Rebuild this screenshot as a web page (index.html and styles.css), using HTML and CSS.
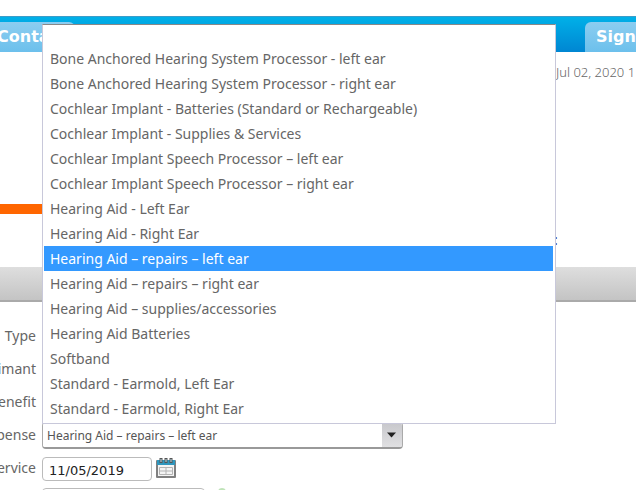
FILE: index.html
```
<!DOCTYPE html>
<html lang="en">
	<head>
		<meta charset="utf-8">
		<title>Claim</title>
		<link rel="stylesheet" href="styles.css">
	</head>
	<body>
		<div class="page">
			<nav class="topbar">
				<a class="tab contact" href="#">Contact</a>
				<a class="tab sign" href="#">Sign</a>
			</nav>
			<div class="date">Jul 02, 2020 1</div>
			<div class="rule"></div>
			<div class="colon">:</div>
			<div class="section"></div>
			<form class="claim">
				<div class="row"><span class="label">Type</span></div>
				<div class="row"><span class="label">Claimant</span></div>
				<div class="row"><span class="label">Benefit</span></div>
				<div class="row">
					<label class="label" for="expense">Expense</label>
					<div class="combo">
						<select class="select" id="expense">
							<option>Hearing Aid – repairs – left ear</option>
						</select>
						<svg class="arrow" viewBox="0 0 20 23"><path d="M5 9h9l-4.500 5z" fill="#222"/></svg>
					</div>
				</div>
				<div class="row">
					<label class="label" for="service">Service</label>
					<input class="text service" id="service" type="text" value="11/05/2019">
					<button class="calendar" type="button" aria-label="Pick a date">
						<svg width="20" height="20" viewBox="0 0 20 20">
							<rect x="0" y="2" width="20" height="18" rx="1" fill="#808080"/>
							<rect x="1" y="2" width="18" height="5" fill="#2f96bd"/>
							<rect x="2" y="7" width="16" height="11" fill="#f4f4f4"/>
							<path d="M3.500 9.500h13v7h-13zM3.500 13h13M10 9.500v7" fill="none" stroke="#b4b4b4"/>
							<path d="M5 0v5M10 0v5M15 0v5" stroke="#555" stroke-width="3"/>
							<path d="M5 1v3M10 1v3M15 1v3" stroke="#b9dbe8"/>
						</svg>
					</button>
				</div>
				<div class="row last">
					<span class="label"></span>
					<input class="text amount" type="text" aria-label="Amount">
					<span class="ok"></span>
				</div>
			</form>
			<ul class="options" role="listbox">
				<li class="option blank" role="option"></li>
				<li class="option" role="option">Bone Anchored Hearing System Processor - left ear</li>
				<li class="option" role="option">Bone Anchored Hearing System Processor - right ear</li>
				<li class="option" role="option">Cochlear Implant - Batteries (Standard or Rechargeable)</li>
				<li class="option" role="option">Cochlear Implant - Supplies &amp; Services</li>
				<li class="option" role="option">Cochlear Implant Speech Processor – left ear</li>
				<li class="option" role="option">Cochlear Implant Speech Processor – right ear</li>
				<li class="option" role="option">Hearing Aid - Left Ear</li>
				<li class="option" role="option">Hearing Aid - Right Ear</li>
				<li class="option selected" role="option" aria-selected="true">Hearing Aid – repairs – left ear</li>
				<li class="option" role="option">Hearing Aid – repairs – right ear</li>
				<li class="option" role="option">Hearing Aid – supplies/accessories</li>
				<li class="option" role="option">Hearing Aid Batteries</li>
				<li class="option" role="option">Softband</li>
				<li class="option" role="option">Standard - Earmold, Left Ear</li>
				<li class="option" role="option">Standard - Earmold, Right Ear</li>
			</ul>
		</div>
	</body>
</html>
```
FILE: styles.css
```
*{
	box-sizing: border-box;
}
body{
	margin: 0;
	background: #fff;
	color: #666;
	font-family: "Noto Sans", "Open Sans", sans-serif;
	font-size: 14px;
	overflow: hidden;
}
.page{
	position: relative;
	padding-top: 16px;
	margin-right: 1px;
	overflow: hidden;
}
.topbar{
	display: flex;
	justify-content: space-between;
	align-items: flex-end;
	height: 36px;
	border-top: 1px solid #3c9cc8;
	background: linear-gradient(#00b0e8, #0086d2);
}
.tab{
	height: 30px;
	padding-top: 2px;
	background: linear-gradient(#8ccdf0, #6cc0ec);
	color: #fff;
	font-family: "DejaVu Sans", sans-serif;
	font-size: 16px;
	font-weight: bold;
	line-height: 26px;
	text-decoration: none;
}
.contact{
	width: 78px;
	margin-left: -3px;
	border-radius: 0 6px 0 0;
}
.sign{
	width: 51px;
	padding-left: 11px;
	border-radius: 6px 0 0 0;
	overflow: hidden;
}
.date{
	width: 80px;
	height: 40px;
	margin-left: auto;
	font-size: 13px;
	font-weight: 300;
	line-height: 40px;
	white-space: nowrap;
}
.rule{
	width: 200px;
	height: 10px;
	margin-top: 112px;
	background: #ff6600;
}
.colon{
	width: 82px;
	height: 53px;
	margin-left: auto;
	color: #34236e;
	line-height: 51px;
}
.section{
	height: 35px;
	border-bottom: 2px solid #aaa;
	background: linear-gradient(#dedede, #c4c4c4);
}
.claim{
	height: 188px;
	padding-top: 17px;
	overflow: hidden;
}
.row{
	display: flex;
	align-items: center;
	height: 33px;
}
.label{
	display: flex;
	justify-content: flex-end;
	width: 36px;
	margin-right: 6px;
	white-space: nowrap;
}
.combo{
	display: flex;
	width: 361px;
	height: 27px;
	margin-top: 2px;
	border: 1px solid #aaa;
	border-bottom: 2px solid #999;
	border-radius: 4px;
	overflow: hidden;
}
.select{
	flex: 1;
	padding: 0 4px;
	border: 0;
	background: #fff;
	color: #555;
	font: inherit;
	font-size: 12px;
	appearance: none;
}
.arrow{
	width: 20px;
	background: linear-gradient(#c8c8cc, #e0e0e2);
}
.text{
	border: 1px solid #bbb;
	border-radius: 4px;
	background: #fff;
	color: #222;
	font-family: "DejaVu Sans", sans-serif;
	font-size: 13px;
}
.service{
	width: 110px;
	height: 24px;
	margin-top: 2px;
	padding: 4px 6px 0;
}
.calendar{
	display: flex;
	margin-left: 4px;
	padding: 0;
	border: 0;
	background: none;
}
.last{
	align-items: flex-start;
	padding-top: 4px;
}
.amount{
	width: 163px;
	height: 24px;
}
.ok{
	width: 8px;
	height: 8px;
	margin-left: 13px;
	border-radius: 4px;
	background: #bfe3b8;
}
.options{
	position: absolute;
	top: 24px;
	left: 42px;
	width: 514px;
	margin: 0;
	padding: 0 2px 2px 1px;
	border: 1px solid #c8c8da;
	border-top-color: #888;
	background: #fff;
	list-style: none;
}
.option{
	height: 25px;
	padding-left: 6px;
	line-height: 25px;
	white-space: nowrap;
}
.blank{
	height: 21px;
}
.selected{
	background: #3399ff;
	color: #fff;
}
```
